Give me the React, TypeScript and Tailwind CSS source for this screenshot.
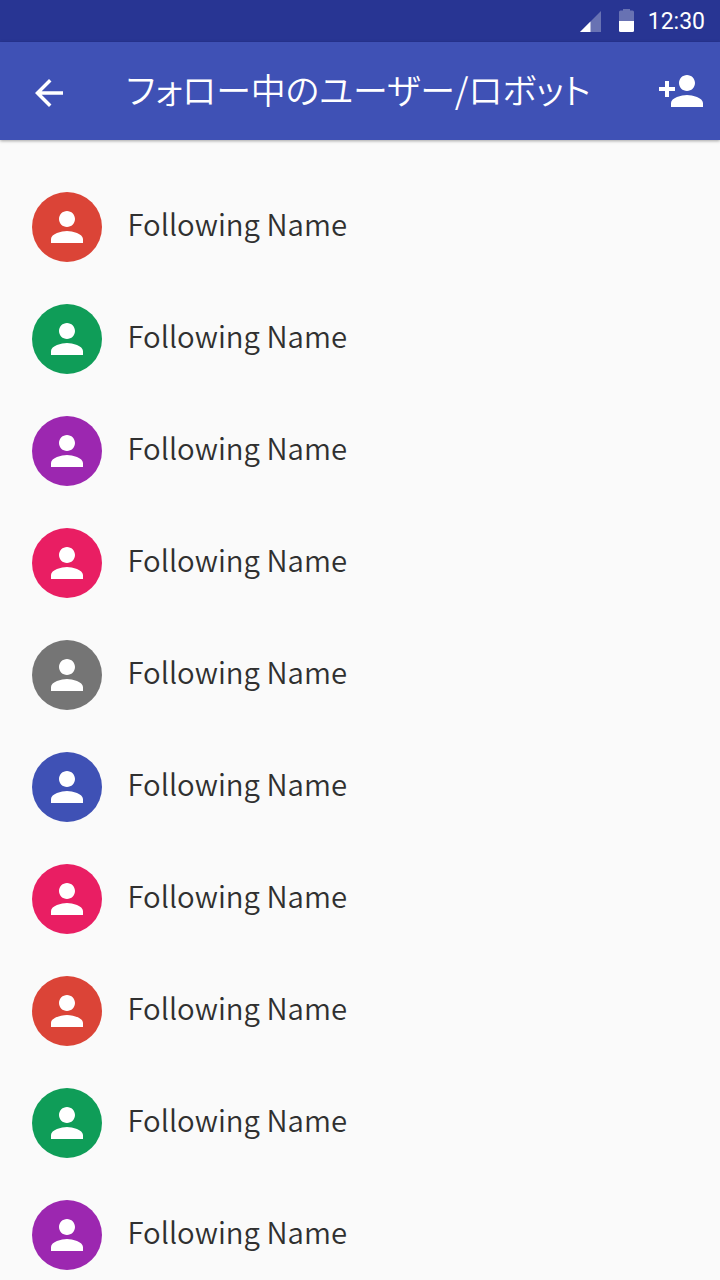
const colors = [
  "bg-[#db4437]",
  "bg-[#0f9d58]",
  "bg-[#9c27b0]",
  "bg-[#e91e63]",
  "bg-[#757575]",
  "bg-[#3f51b5]",
  "bg-[#e91e63]",
  "bg-[#db4437]",
  "bg-[#0f9d58]",
  "bg-[#9c27b0]",
];

function StatusBar() {
  return (
    <div className="flex h-[42px] shrink-0 items-center justify-end bg-[#283593] pr-[15px] text-white">
      <svg className="mr-[18px] h-[21px] w-[21px]" viewBox="0 0 22 22">
        <path d="M22 0V22H0Z" fill="#fff" fillOpacity=".3" />
        <path d="M11 11V22H0Z" fill="#fff" />
      </svg>
      <svg className="mr-[14px] mb-px h-[23px] w-[15px]" viewBox="0 0 15 23">
        <path d="M4 0h7v1.5h2.500a1.500 1.500 0 0 1 1.500 1.500V12H0V3a1.500 1.500 0 0 1 1.500-1.500H4Z" fill="#fff" fillOpacity=".3" />
        <path d="M0 12h15v9.500a1.500 1.500 0 0 1-1.500 1.500h-12A1.500 1.500 0 0 1 0 21.500Z" fill="#fff" />
      </svg>
      <span className="font-[Roboto,sans-serif] text-[23px] leading-none">12:30</span>
    </div>
  );
}

function AppBar() {
  return (
    <header className="flex h-[98px] shrink-0 items-center bg-[#3f51b5] pr-[17px] pl-[28px] text-white shadow-[0_1px_3px_rgba(0,0,0,0.35)]">
      <svg className="mt-1 h-[42px] w-[42px]" viewBox="0 0 24 24" fill="currentColor">
        <path d="M20 11H7.83l5.59-5.59L12 4l-8 8 8 8 1.41-1.41L7.83 13H20v-2z" />
      </svg>
      <h1 className="mb-1 ml-[56px] flex-1 whitespace-nowrap font-['Noto_Sans_CJK_JP',sans-serif] text-[34.900px] leading-none font-[350] [font-feature-settings:'palt']">
        フォロー中のユーザー/ロボット
      </h1>
      <svg className="h-[32px] w-[44px]" viewBox="1 4 22 16" fill="currentColor">
        <path d="M15 12c2.21 0 4-1.79 4-4s-1.79-4-4-4-4 1.79-4 4 1.79 4 4 4zm-9-2V7H4v3H1v2h3v3h2v-3h3v-2H6zm9 4c-2.67 0-8 1.34-8 4v2h16v-2c0-2.66-5.33-4-8-4z" />
      </svg>
    </header>
  );
}

function UserRow({ color }: { color: string }) {
  return (
    <li className="flex h-[112px] shrink-0 items-center pl-[32px]">
      <div className={`flex size-[70px] items-center justify-center rounded-full ${color}`}>
        <svg className="h-[32px] w-[32px]" viewBox="4 4 16 16" fill="#fff">
          <path d="M12 12c2.21 0 4-1.79 4-4s-1.79-4-4-4-4 1.79-4 4 1.79 4 4 4zm0 2c-2.67 0-8 1.34-8 4v2h16v-2c0-2.66-5.33-4-8-4z" />
        </svg>
      </div>
      <span className="mb-[7px] ml-[25.500px] font-['Noto_Sans_CJK_JP',sans-serif] text-[29.350px] leading-none font-[350] text-[#303030]">
        Following Name
      </span>
    </li>
  );
}

export default function App() {
  return (
    <main className="flex h-[1280px] w-[720px] flex-col overflow-hidden bg-[#fafafa]">
      <StatusBar />
      <AppBar />
      <ul className="flex flex-col pt-[31.400px]">
        {colors.map((color, i) => (
          <UserRow key={i} color={color} />
        ))}
      </ul>
    </main>
  );
}
